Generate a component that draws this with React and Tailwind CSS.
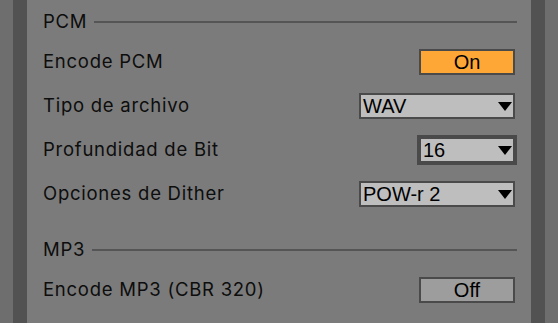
import React from 'react';

const Arrow = () => (
  <svg width="14" height="9" viewBox="0 0 14 9" className="shrink-0">
    <path d="M0 0 H14 L7 9 Z" fill="#000" />
  </svg>
);

const Header = ({ title }) => (
  <div className="h-[36px] flex items-center gap-[7px]">
    <span className="text-[18.5px] tracking-[0.75px] text-[#0d0d0d]">{title}</span>
    <div className="flex-1 h-[2px] bg-[#555555]" />
  </div>
);

const Row = ({ label, children }) => (
  <div className="h-[44px] flex items-center justify-between">
    <span className="text-[18.5px] tracking-[0.75px] text-[#0d0d0d]">{label}</span>
    {children}
  </div>
);

const Toggle = ({ on, children }) => (
  <div
    className={`mr-[2px] w-[96px] h-[26px] border-2 border-[#4a4a4a] flex items-center justify-center text-[20px] leading-none text-black font-['Liberation_Sans',Arial,sans-serif] ${
      on ? 'bg-[#ffa736]' : 'bg-[#9d9d9d]'
    }`}
  >
    {children}
  </div>
);

const Select = ({ value, wide, focused }) => (
  <div
    className={`mr-[2px] h-[26px] border-2 border-[#4a4a4a] bg-[#bebebe] flex items-center justify-between pl-[2px] pr-[1px] text-[20px] leading-none text-black font-['Liberation_Sans',Arial,sans-serif] ${
      wide ? 'w-[156px]' : 'w-[96px]'
    } ${focused ? 'outline-2 outline-[#4a4a4a]' : ''}`}
  >
    <span>{value}</span>
    <Arrow />
  </div>
);

export default function App() {
  return (
    <div className="w-[558px] h-[323px] flex bg-[#7b7b7b] overflow-hidden font-['Inter',sans-serif]">
      <div className="w-[13px] bg-[#6e6e6e]" />
      <div className="w-[14px] bg-[#525252]" />
      <div className="flex-1 pl-[16px] pr-[14px] pt-[4px]">
        <Header title="PCM" />
        <Row label="Encode PCM">
          <Toggle on>On</Toggle>
        </Row>
        <Row label="Tipo de archivo">
          <Select value="WAV" wide />
        </Row>
        <Row label="Profundidad de Bit">
          <Select value="16" focused />
        </Row>
        <Row label="Opciones de Dither">
          <Select value="POW-r 2" wide />
        </Row>
        <div className="h-[16px]" />
        <Header title="MP3" />
        <Row label="Encode MP3 (CBR 320)">
          <Toggle>Off</Toggle>
        </Row>
      </div>
      <div className="w-[14px] bg-[#525252]" />
      <div className="w-[13px] bg-[#6e6e6e]" />
    </div>
  );
}
